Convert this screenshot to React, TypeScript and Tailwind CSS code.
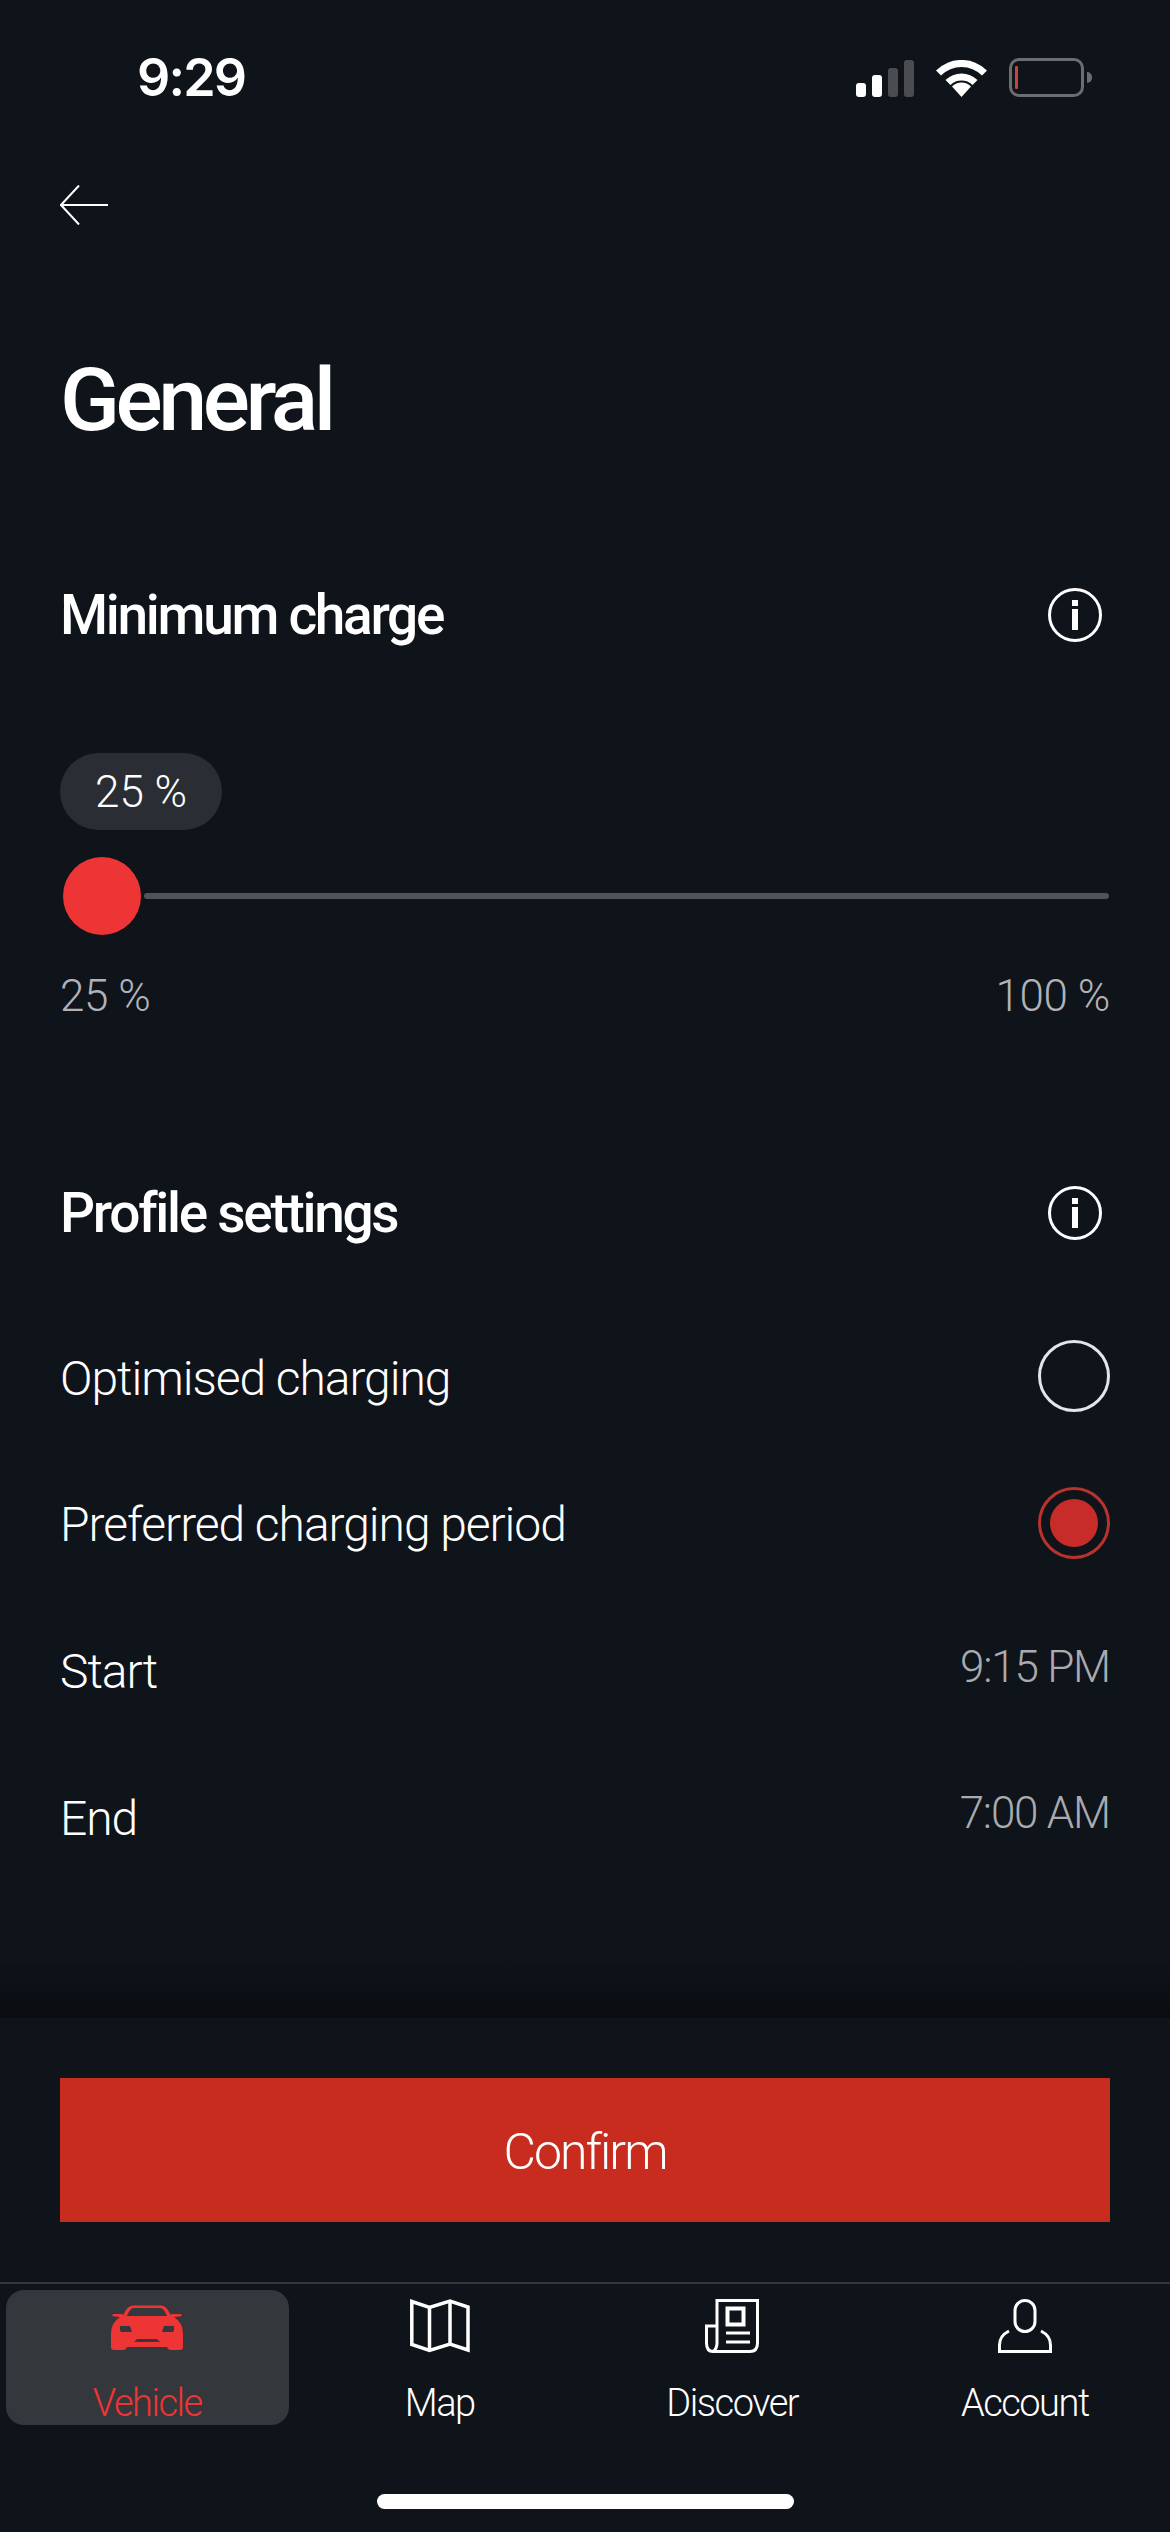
import React from "react";

const FONT = "font-['Roboto',sans-serif]";

function StatusBar() {
  return (
    <div className="flex h-[156px] items-start">
      <span className="ml-[137px] mt-[48px] text-[52px] leading-[60px] font-semibold text-white font-['Inter',sans-serif] tracking-[-1.8px]">9:29</span>
      <div className="ml-auto mr-[86px] mt-[58px] flex items-end">
        <div className="flex items-end gap-[6px]">
          <div className="h-[14px] w-[10px] rounded-[3px] bg-white" />
          <div className="h-[22px] w-[10px] rounded-[3px] bg-white" />
          <div className="h-[29px] w-[10px] rounded-[3px] bg-[#4a4c50]" />
          <div className="h-[37px] w-[10px] rounded-[3px] bg-[#4a4c50]" />
        </div>
        <svg className="ml-[22px] h-[37px] w-[51px]" viewBox="0 0 51 37">
          <path d="M25.5 37 L16 26.5 A13.5 13.5 0 0 1 35 26.5 Z" fill="#fff" />
          <path d="M9.5 20 A23 23 0 0 1 41.5 20 L36.5 25 A16 16 0 0 0 14.5 25 Z" fill="#fff" />
          <path d="M0 10.5 A36 36 0 0 1 51 10.5 L46 15.5 A29 29 0 0 0 5 15.5 Z" fill="#fff" />
        </svg>
        <div className="relative ml-[22px] h-[39px] w-[75px] rounded-[10px] border-[3px] border-[#6b6d70]">
          <div className="absolute left-[3px] top-[5px] h-[23px] w-[3px] rounded-[1px] bg-[#c8453c]" />
          <div className="absolute left-[75px] top-[11px] h-[11px] w-[5px] rounded-r-full bg-[#6b6d70]" />
        </div>
      </div>
    </div>
  );
}

function InfoIcon() {
  return (
    <svg className="h-[54px] w-[54px]" viewBox="0 0 54 54">
      <circle cx="27" cy="27" r="25.5" fill="none" stroke="#fff" strokeWidth="3" />
      <rect x="24" y="12" width="6" height="6" fill="#fff" />
      <rect x="24" y="21" width="6" height="21" fill="#fff" />
    </svg>
  );
}

function SectionHeader({ title, className }: { title: string; className: string }) {
  return (
    <div className={`flex h-[80px] items-center justify-between pr-[68px] pl-[60px] ${className}`}>
      <h2 className="text-[55px] font-medium tracking-[-2.3px] text-white">{title}</h2>
      <InfoIcon />
    </div>
  );
}

function SettingRow({ label, children }: { label: string; children: React.ReactNode }) {
  return (
    <div className="flex h-[146.67px] items-center justify-between px-[60px]">
      <span className="pt-[5px] text-[48px] font-light tracking-[-1.05px] text-white">{label}</span>
      {children}
    </div>
  );
}

function TimeValue({ value }: { value: string }) {
  return <span className="pb-[6px] text-[44px] font-light tracking-[-1.2px] text-[#a9abb0]">{value}</span>;
}

function CarIcon() {
  return (
    <svg className="mb-[3px] h-[45px] w-[72px]" viewBox="0 0 72 45">
      <path
        fillRule="evenodd"
        fill="#ed3535"
        d="M22 0.5 H50 C54 0.5 57 4 59.5 10 L61 9 H70 L71 11 Q66 12 63 12 Q72 18 72 28 V42 Q72 45 69 45 H60 Q57 45 56 42 H16 Q15 45 12 45 H3 Q0 45 0 42 V28 Q0 18 9 12 Q6 12 1 11 L2 9 H11 L12.5 10 C15 4 18 0.5 22 0.5 Z M23 3 C20 3 18 6 16 11 H56 C54 6 52 3 49 3 Z M9 21 H19 L21 27 H11 Q9 27 9 25 Z M63 21 H53 L51 27 H61 Q63 27 63 25 Z M26 34 H46 L49 37 H23 Z"
      />
    </svg>
  );
}

function MapIcon() {
  return (
    <svg className="h-[54px] w-[60px]" viewBox="0 0 60 54" fill="none" stroke="#fff" strokeWidth="3.5">
      <path d="M1.8 2.5 L19.5 8.5 L40 2 L58 8 V51 L40 45 L19.5 51.5 L1.8 45.5 Z" />
      <path d="M19.5 8.5 V51.5 M40 2 V45" />
    </svg>
  );
}

function DiscoverIcon() {
  return (
    <svg className="h-[54px] w-[54px]" viewBox="0 0 54 54" fill="none" stroke="#fff" strokeWidth="3">
      <path d="M12 27 V1.5 H52.5 V44 Q52.5 52.5 45 52.5 H8 Q1.5 52.5 1.5 44 V27 H12 V44 Q12 50 8 52.5" />
      <rect x="22.5" y="9.5" width="16" height="16" strokeWidth="4" />
      <path d="M21 34 H45 M21 43 H45" />
    </svg>
  );
}

function AccountIcon() {
  return (
    <svg className="h-[54px] w-[54px]" viewBox="0 0 54 54" fill="none" stroke="#fff" strokeWidth="3">
      <rect x="17" y="1.5" width="20" height="31" rx="10" />
      <path d="M11 32 C5 35 1.5 40 1.5 46 V52.5 H52.5 V46 C52.5 40 49 35 43 32" />
    </svg>
  );
}

function Tab({ label, active, children }: { label: string; active?: boolean; children: React.ReactNode }) {
  return (
    <div
      className={`ml-[6px] mr-[4px] flex h-[135px] flex-col items-center rounded-[18px] ${
        active ? "bg-[#34373c]" : ""
      }`}
    >
      <div className="flex h-[69px] items-end">{children}</div>
      <span
        className={`mt-[28px] text-[38px] leading-[44px] font-light tracking-[-1.5px] ${
          active ? "text-[#ed3535]" : "text-white"
        }`}
      >
        {label}
      </span>
    </div>
  );
}

export default function App() {
  return (
    <div className={`flex h-[2532px] w-[1170px] flex-col overflow-hidden bg-[#0f131a] ${FONT}`}>
      <StatusBar />
      <div className="flex h-[98px] items-center pl-[60px]">
        <svg className="h-[40px] w-[48px]" viewBox="0 0 48 40" fill="none" stroke="#fff" strokeWidth="2">
          <path d="M48 20 H1 M19 0.5 L1 20 L19 39.5" />
        </svg>
      </div>
      <h1 className="mt-[96px] h-[100px] pl-[60px] text-[88px] leading-[100px] font-medium tracking-[-4.4px] text-white">
        General
      </h1>

      <SectionHeader title="Minimum charge" className="mt-[125px]" />

      <div className="mt-[98px] ml-[60px] flex h-[77px] w-[162px] items-center justify-center rounded-full bg-[#2a2d33] text-[44px] font-light text-white">
        25 %
      </div>
      <div className="mt-[27px] flex h-[78px] items-center pr-[61px] pl-[63px]">
        <div className="h-[78px] w-[78px] shrink-0 rounded-full bg-[#ed3535]" />
        <div className="ml-[3px] h-[6px] flex-1 rounded-full bg-[#51535c]" />
      </div>
      <div className="mt-[41px] flex h-[40px] items-center justify-between px-[60px] text-[44px] font-light tracking-[-0.4px] text-[#b0b2b8]">
        <span>25 %</span>
        <span>100 %</span>
      </div>

      <SectionHeader title="Profile settings" className="mt-[157px]" />

      <div className="mt-[50px]">
        <SettingRow label="Optimised charging">
          <div className="h-[72px] w-[72px] rounded-full border-[3px] border-[#e4e5e7]" />
        </SettingRow>
        <SettingRow label="Preferred charging period">
          <div className="flex h-[72px] w-[72px] items-center justify-center rounded-full border-[3px] border-[#b8332c]">
            <div className="h-[48px] w-[48px] rounded-full bg-[#c72c28]" />
          </div>
        </SettingRow>
        <SettingRow label="Start">
          <TimeValue value="9:15 PM" />
        </SettingRow>
        <SettingRow label="End">
          <TimeValue value="7:00 AM" />
        </SettingRow>
      </div>

      <div className="mt-auto h-[58px] bg-gradient-to-b from-transparent to-[#0a0c10]" />

      <div className="h-[264px] px-[60px] pt-[60px]">
        <button className="flex h-[144px] w-full items-center justify-center bg-[#c72c1f] pt-[5px] text-[50px] font-light tracking-[-2px] text-white">
          Confirm
        </button>
      </div>

      <div className="flex h-[250px] flex-col border-t-2 border-[#33363c] pt-[6px]">
        <div className="grid grid-cols-4">
          <Tab label="Vehicle" active>
            <CarIcon />
          </Tab>
          <Tab label="Map">
            <MapIcon />
          </Tab>
          <Tab label="Discover">
            <DiscoverIcon />
          </Tab>
          <Tab label="Account">
            <AccountIcon />
          </Tab>
        </div>
        <div className="mx-auto mt-[69px] h-[15px] w-[417px] rounded-full bg-white" />
      </div>
    </div>
  );
}
